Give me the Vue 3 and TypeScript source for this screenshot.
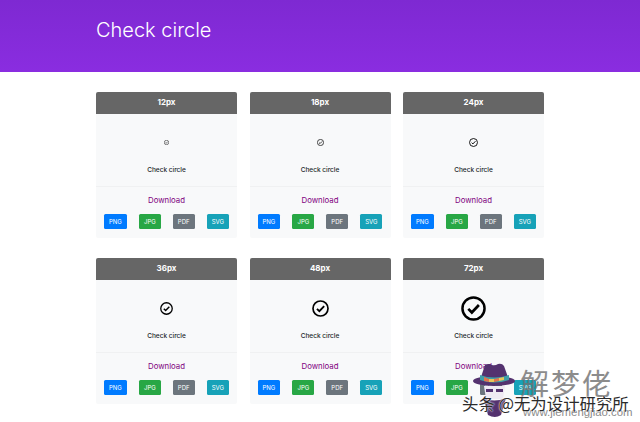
<template>
  <div class="page">
    <header class="hero">
      <h1 class="hero__title">Check circle</h1>
    </header>
    <main class="grid">
      <section v-for="card in cards" :key="card" class="card">
        <div class="card__head">{{ card }}px</div>
        <div class="card__body">
          <div class="card__icon">
            <svg :width="card / 3 + 1" :height="card / 3 + 1" viewBox="0 0 24 24" fill="none" stroke="#000" stroke-width="2.4">
              <circle cx="12" cy="12" r="10.6" />
              <path d="M7 12.4l3.4 3.4L17.2 8.6" stroke-width="2.6" />
            </svg>
          </div>
          <p class="card__name">Check circle</p>
        </div>
        <div class="card__foot">
          <a class="card__link" href="#">Download</a>
          <div class="card__btns">
            <span v-for="b in buttons" :key="b.label" class="btn" :class="b.cls">{{ b.label }}</span>
          </div>
        </div>
      </section>
    </main>
    <div class="mark">
      <svg class="mark__hat" width="46" height="58" viewBox="0 0 46 58">
        <path d="M8 19L13 4q3-2 7 0 3 1 6-1 4-1 6 2l5 14z" fill="#54326f" />
        <ellipse cx="22" cy="20" rx="21" ry="5" fill="#54326f" />
        <path d="M8 14q14 5 29 0v5q-15 5-29 0z" fill="#3f9fa8" />
        <path d="M12 16l5 2v3l-5-1zM22 18l5-1v3l-5 1z" fill="#e2734f" />
        <path d="M17 18l5 0v3l-5 0zM27 17l5-1v3l-5 1z" fill="#e8c65a" />
        <path d="M12 25h21l-2 13H14z" fill="#efeaf3" />
        <path d="M14 28h7v3h-7zM24 28h7v3h-7z" fill="#54326f" />
        <path d="M11 37q11 5 23 0l-5 17q-6 4-13 0z" fill="#54326f" />
      </svg>
      <span class="mark__big">解梦佬</span>
      <span class="mark__url">www.jiemengjiao.com</span>
      <span class="mark__line">头条 @无为设计研究所</span>
    </div>
  </div>
</template>

<script setup lang="ts">
const cards: number[] = [12, 18, 24, 36, 48, 72]
const buttons = [
  { label: 'PNG', cls: 'btn--blue' },
  { label: 'JPG', cls: 'btn--green' },
  { label: 'PDF', cls: 'btn--grey' },
  { label: 'SVG', cls: 'btn--teal' },
]
</script>

<style>
html,
body {
  margin: 0;
  background: #fff;
}
</style>

<style scoped>
.page {
  position: relative;
  width: 640px;
  height: 422px;
  overflow: hidden;
  font-family: Inter, "Liberation Sans", sans-serif;
}

.hero {
  height: 72px;
  box-sizing: border-box;
  padding: 17px 96px 0;
  background: linear-gradient(#7e29d2, #8a2de0);
}

.hero__title {
  margin: 0;
  font-size: 20px;
  line-height: 26px;
  font-weight: 300;
  color: #fff;
}

.grid {
  display: grid;
  grid-template-columns: repeat(3, 141px);
  column-gap: 12.5px;
  row-gap: 20px;
  padding: 20px 0 0 96px;
}

.card {
  height: 146px;
  display: flex;
  flex-direction: column;
  background: #f8f9fa;
  border-radius: 2px;
  overflow: hidden;
}

.card__head {
  height: 22px;
  line-height: 20px;
  flex: none;
  background: #666;
  color: #fff;
  text-align: center;
  font-size: 8px;
  font-weight: 700;
}

.card__body {
  height: 73px;
  flex: none;
  display: flex;
  flex-direction: column;
  align-items: center;
  border-bottom: 1px solid #f0f1f2;
  box-sizing: border-box;
}

.card__icon {
  height: 50px;
  width: 100%;
  display: flex;
  align-items: center;
  justify-content: center;
  padding-top: 6px;
  box-sizing: border-box;
}

.card__name {
  margin: 0;
  padding-top: 1px;
  font-size: 6.5px;
  line-height: 10px;
  font-weight: 500;
  color: #212529;
}

.card__foot {
  flex: 1;
  display: flex;
  flex-direction: column;
  align-items: center;
  padding: 8px 8px 0;
}

.card__link {
  font-size: 7.8px;
  line-height: 11px;
  color: #800080;
  text-decoration: none;
}

.card__btns {
  width: 100%;
  display: flex;
  justify-content: space-between;
  margin-top: 8px;
}

.btn {
  height: 15px;
  line-height: 15px;
  padding: 0 5px;
  border-radius: 1.5px;
  font-size: 6px;
  color: #fff;
}

.btn--blue {
  background: #007bff;
}

.btn--green {
  background: #28a745;
}

.btn--grey {
  background: #6c757d;
}

.btn--teal {
  background: #17a2b8;
}

/* watermark over the last card */
.mark {
  position: absolute;
  inset: 0;
  pointer-events: none;
  font-family: "Noto Sans CJK SC", sans-serif;
}

.mark__hat {
  position: absolute;
  left: 472px;
  top: 361px;
}

.mark__big {
  position: absolute;
  left: 520px;
  top: 365px;
  font-size: 29px;
  line-height: 34px;
  letter-spacing: 2px;
  color: #707070;
  opacity: 0.8;
  white-space: nowrap;
}

.mark__url {
  position: absolute;
  left: 523px;
  top: 406px;
  font-family: "Liberation Sans", sans-serif;
  font-size: 11.4px;
  line-height: 12px;
  color: #8a8a8a;
  white-space: nowrap;
}

.mark__line {
  position: absolute;
  left: 462px;
  top: 393px;
  font-size: 16.4px;
  line-height: 20px;
  color: #2b2b2b;
  white-space: nowrap;
  text-shadow: 0 0 1px #fff, 0 0 2px #fff;
}
</style>
